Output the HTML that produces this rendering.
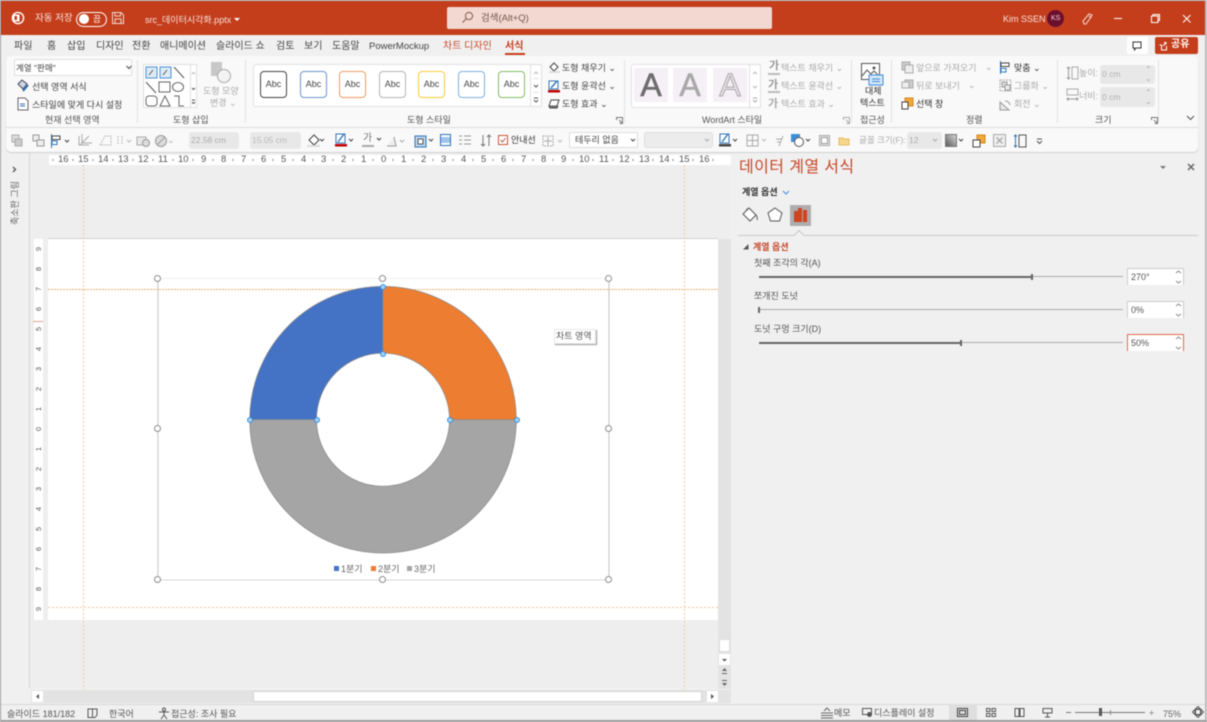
<!DOCTYPE html>
<html lang="ko"><head><meta charset="utf-8"><title>PowerPoint</title>
<style>
html,body{margin:0;padding:0;width:1207px;height:722px;overflow:hidden;background:#f0f0f0}
#r{position:absolute;left:0;top:0;width:1207px;height:722px;overflow:hidden;background:#f0f0f0;filter:blur(.5px);font-family:"Liberation Sans","Noto Sans CJK KR",sans-serif;color:#444}
#r div,#r span,#r svg{position:absolute}
.t{white-space:nowrap;font-size:9.5px;line-height:12px;color:#444}
.g{color:#aaa}.m{color:#666}
.w{color:#fff}
.b{background:#fff;border:1px solid #ddd;box-sizing:border-box}
.abc{width:24px;height:27px;border-radius:4px;border:1.5px solid;background:#fff;box-sizing:border-box;font-size:9px;line-height:24px;text-align:center;color:#444}
.dis{background:#e8e8e8;border-radius:3px;box-sizing:border-box;color:#aaa;font-size:8.5px;line-height:16px;padding-left:2px}
.wa{width:34px;height:34px;background:#f5f0f5;text-align:center;font:normal 32px/35px "Liberation Sans",sans-serif;-webkit-text-stroke:.6px currentColor}
.h{width:5px;height:5px;border:1.5px solid #8d8d8d;border-radius:50%;background:#fff}
.p{width:4px;height:4px;border:1px solid #3d8fd6;border-radius:50%;background:#9fd0f5}
</style></head><body><div id="r">

<!-- window frame -->
<div style="left:0;top:0;width:1207px;height:1px;background:#a9a9a9"></div>
<div style="left:0;top:0;width:1px;height:722px;background:#9a9a9a"></div>
<div style="left:1205px;top:0;width:2px;height:722px;background:#bbb"></div>
<div style="left:0;top:720px;width:1207px;height:2px;background:#9a9a9a"></div>

<!-- title bar -->
<div style="left:1px;top:1px;width:1204px;height:34px;background:#c43e1c"></div>
<svg style="left:11px;top:11px" width="14" height="14" viewBox="0 0 14 14"><circle cx="7" cy="7" r="5.6" fill="none" stroke="#fff" stroke-width="1.4"/><rect x="1.5" y="3.5" width="7" height="7" fill="#fff"/><rect x="3.5" y="5" width="2.5" height="4" fill="#c43e1c"/></svg>
<div class="t w" style="left:35px;top:13px;font-size:9.5px;color:#f7e3dd">자동 저장</div>
<div style="left:76px;top:12px;width:29px;height:13px;border:1px solid #fff;border-radius:8px"></div>
<div style="left:79px;top:14px;width:10px;height:10px;background:#fff;border-radius:50%"></div>
<div class="t" style="left:93px;top:13px;font-size:8.5px;color:#fff">끔</div>
<svg style="left:112px;top:12px" width="12" height="12" viewBox="0 0 12 12"><path d="M.5.5H9L11.5 3V11.5H.5Z M3 .5V4H8.5V.5 M3 11.5V7H9V11.5" fill="none" stroke="#f3d5cc"/></svg>
<div class="t" style="left:145px;top:14px;font-size:9px;color:#f7e3dd">src_데이터시각화.pptx</div>
<div style="left:234px;top:18px;border:3px solid transparent;border-top:3px solid #fff"></div>
<div style="left:447px;top:7px;width:325px;height:22px;background:#f2d8d1;border-radius:2px"></div>
<svg style="left:461px;top:11px" width="13" height="13" viewBox="0 0 13 13"><circle cx="8" cy="5" r="3.6" fill="none" stroke="#7d5a50"/><path d="M5.4 7.6 1.5 11.5" stroke="#7d5a50"/></svg>
<div class="t" style="left:481px;top:13px;font-size:9.5px;color:#74564e">검색(Alt+Q)</div>
<div class="t" style="left:1003px;top:13px;font-size:9px;color:#f7e3dd">Kim SSEN</div>
<div style="left:1047px;top:10px;width:17px;height:17px;border-radius:50%;background:#6c0f2c"></div>
<div class="t" style="left:1051px;top:13px;font-size:7px;color:#f3d5dc">KS</div>
<svg style="left:1081px;top:12px" width="13" height="14" viewBox="0 0 13 14"><path d="M3 12 2 9 8 2 11 3 10 5 5 12Z M8 4 10 6" fill="none" stroke="#f6dcd5"/></svg>
<div style="left:1114px;top:18px;width:8px;height:1px;background:#fff"></div>
<svg style="left:1150px;top:13px" width="11" height="11" viewBox="0 0 11 11"><path d="M1.5 3H8V9.5H1.5Z M3 3V1.5H9.5V7.5H8" fill="none" stroke="#fff"/></svg>
<svg style="left:1181px;top:13px" width="11" height="11" viewBox="0 0 11 11"><path d="M2 2 9.5 9.5M9.5 2 2 9.5" stroke="#fff"/></svg>

<!-- tabs -->
<div class="t" style="left:14px;top:41px;font-size:10px">파일</div>
<div class="t" style="left:47px;top:41px;font-size:10px">홈</div>
<div class="t" style="left:67px;top:41px;font-size:10px">삽입</div>
<div class="t" style="left:96px;top:41px;font-size:10px">디자인</div>
<div class="t" style="left:132px;top:41px;font-size:10px">전환</div>
<div class="t" style="left:160px;top:41px;font-size:10px">애니메이션</div>
<div class="t" style="left:216px;top:41px;font-size:10px">슬라이드 쇼</div>
<div class="t" style="left:276px;top:41px;font-size:10px">검토</div>
<div class="t" style="left:304px;top:41px;font-size:10px">보기</div>
<div class="t" style="left:332px;top:41px;font-size:10px">도움말</div>
<div class="t" style="left:369px;top:41px;font-size:9.5px">PowerMockup</div>
<div class="t" style="left:443px;top:41px;font-size:10px;color:#c8492a">차트 디자인</div>
<div class="t" style="left:505px;top:41px;font-size:10px;color:#c43e1c;font-weight:bold">서식</div>
<div style="left:505px;top:53px;width:20px;height:2px;background:#c43e1c"></div>
<div style="left:1127px;top:37px;width:21px;height:17px;background:#fff;border-radius:2px"></div>
<svg style="left:1132px;top:41px" width="10" height="10" viewBox="0 0 10 10"><path d="M1 1H9V7H4L2.5 9V7H1Z" fill="none" stroke="#333"/></svg>
<div style="left:1155px;top:37px;width:43px;height:17px;background:#c43e1c;border-radius:2px"></div>
<svg style="left:1158px;top:41px" width="10" height="10" viewBox="0 0 10 10"><path d="M1.5 4H3.5V9H8.5V5M5 5 8 1.5M6 1.5H8V3.5" fill="none" stroke="#fff"/></svg>
<div class="t" style="left:1171px;top:39px;font-size:10px;color:#fff;font-weight:bold">공유</div>

<!-- ribbon -->
<div style="left:6px;top:56px;width:1192px;height:96px;background:#f9f9f9;border-radius:5px;box-shadow:0 1px 1px #ccc"></div>
<div style="left:6px;top:127px;width:1192px;height:1px;background:#dcdcdc"></div>

<!-- group 1 -->
<div class="b" style="left:14px;top:59px;width:118px;height:17px;border-radius:2px"></div>
<div class="t" style="left:16px;top:62px;font-size:8.5px">계열 "판매"</div>
<svg style="left:126px;top:65px" width="6" height="5" viewBox="0 0 6 5"><path d="M.5 1 3 3.500 5.500 1" fill="none" stroke="#444"/></svg>
<svg style="left:17px;top:79px" width="13" height="14" viewBox="0 0 13 14"><path d="M1 5 5 1 10 5 6 10Z" fill="#cfd8e6" stroke="#445"/><path d="M6 12 11 6" stroke="#2f75b5" stroke-width="2"/></svg>
<div class="t" style="left:32px;top:81px;font-size:9px">선택 영역 서식</div>
<svg style="left:17px;top:97px" width="12" height="14" viewBox="0 0 12 14"><path d="M1 1H8L11 4V13H1Z" fill="#fff" stroke="#666"/><path d="M3 7H8M3 9H8" stroke="#2f75b5"/></svg>
<div class="t" style="left:32px;top:99px;font-size:9px">스타일에 맞게 다시 설정</div>
<div class="t m" style="left:45px;top:114px;font-size:9px;color:#555">현재 선택 영역</div>
<div style="left:137px;top:60px;width:1px;height:63px;background:#e3e3e3"></div>

<!-- group 2 -->
<div style="left:143px;top:64px;width:54px;height:44px;background:#fff;border:1px solid #e0e0e0;box-sizing:border-box"></div>
<svg style="left:144px;top:65px" width="46" height="42" viewBox="0 0 46 42">
<rect x="2" y="2" width="11" height="11" fill="#dcebf8" stroke="#4a8fd0"/><rect x="16" y="2" width="11" height="11" fill="#dcebf8" stroke="#4a8fd0"/>
<path d="M5 10 9 5M19 10 23 5" stroke="#555"/><path d="M30 2 40 13M2 17 12 28" stroke="#555"/>
<rect x="15" y="17" width="11" height="10" fill="none" stroke="#666"/><ellipse cx="34" cy="22" rx="5.5" ry="4.5" fill="none" stroke="#666"/>
<rect x="2" y="31" width="11" height="10" rx="3" fill="none" stroke="#666"/><path d="M16 41 21 31 26 41Z M30 31H35V41H40" fill="none" stroke="#666"/>
</svg>
<div style="left:190px;top:64px;width:7px;height:44px;background:#fff;border:1px solid #e0e0e0;box-sizing:border-box"></div>
<svg style="left:190px;top:64px" width="7" height="44" viewBox="0 0 7 44"><path d="M2 10 3.500 8.500 5 10" fill="none" stroke="#bbb"/><path d="M2 24 3.500 25.500 5 24" fill="none" stroke="#555"/><path d="M2 36H5M2 38 3.500 39.500 5 38" fill="none" stroke="#555"/></svg>
<svg style="left:210px;top:62px" width="22" height="22" viewBox="0 0 22 22"><rect x="1" y="0" width="11" height="14" fill="#c8c8c8"/><circle cx="14" cy="14" r="6.500" fill="#f3f3f3" stroke="#aaa"/></svg>
<div class="t g" style="left:203px;top:85px;font-size:9px">도형 모양</div>
<div class="t g" style="left:210px;top:97px;font-size:9px">변경 ⌄</div>
<div class="t m" style="left:173px;top:114px;font-size:9px;color:#555">도형 삽입</div>
<div style="left:245px;top:60px;width:1px;height:63px;background:#e3e3e3"></div>

<!-- group 3 -->
<div style="left:253px;top:64px;width:281px;height:43px;background:#fff;border:1px solid #e2e2e2;border-radius:3px;box-sizing:border-box"></div>
<div class="abc" style="left:260px;top:71px;width:27px;border-color:#444">Abc</div>
<div class="abc" style="left:300px;top:71px;width:27px;border-color:#6d93d2">Abc</div>
<div class="abc" style="left:339px;top:71px;width:27px;border-color:#ee9a63">Abc</div>
<div class="abc" style="left:379px;top:71px;width:27px;border-color:#b3b3b3">Abc</div>
<div class="abc" style="left:418px;top:71px;width:27px;border-color:#fdc83a">Abc</div>
<div class="abc" style="left:458px;top:71px;width:27px;border-color:#7cb0e0">Abc</div>
<div class="abc" style="left:498px;top:71px;width:27px;border-color:#85bb62">Abc</div>
<div style="left:530px;top:64px;width:12px;height:43px;background:#fff;border:1px solid #e0e0e0;box-sizing:border-box"></div>
<svg style="left:530px;top:64px" width="12" height="43" viewBox="0 0 12 43"><path d="M4 10 6 8 8 10" fill="none" stroke="#bbb"/><path d="M3 14.500H9M3 28.500H9" stroke="#e0e0e0"/><path d="M4 21 6 23 8 21" fill="none" stroke="#555"/><path d="M4 34H8M4 36 6 38 8 36" fill="none" stroke="#555"/></svg>
<svg style="left:549px;top:62px" width="11" height="11" viewBox="0 0 11 11"><path d="M1 5 5 1 9 5 5 9Z" fill="#fff" stroke="#444"/><rect x="0" y="9" width="11" height="2" fill="#ddd"/></svg>
<div class="t" style="left:562px;top:62px;font-size:9px">도형 채우기 ⌄</div>
<svg style="left:548px;top:80px" width="12" height="13" viewBox="0 0 12 13"><rect x="1" y="1" width="9" height="8" fill="#fff" stroke="#2f75b5"/><path d="M3 8 9 1" stroke="#2f75b5" stroke-width="1.400"/><rect x="0" y="10" width="12" height="2.500" fill="#c00000"/></svg>
<div class="t" style="left:562px;top:80px;font-size:9px">도형 윤곽선 ⌄</div>
<svg style="left:548px;top:99px" width="12" height="11" viewBox="0 0 12 11"><path d="M3 1H11L9 7H1Z" fill="#fff" stroke="#444"/><path d="M1 7 2 9H9L10 7" fill="#777" stroke="#444"/></svg>
<div class="t" style="left:562px;top:98px;font-size:9px">도형 효과 ⌄</div>
<div class="t m" style="left:407px;top:114px;font-size:9px;color:#555">도형 스타일</div>
<svg style="left:616px;top:117px" width="7" height="7" viewBox="0 0 7 7"><path d="M.5 3V.5H6.500V6.500H3.500M3 3 6 6" fill="none" stroke="#777"/></svg>
<div style="left:624px;top:60px;width:1px;height:63px;background:#e3e3e3"></div>

<!-- wordart -->
<div style="left:631px;top:64px;width:130px;height:44px;background:#fff;border:1px solid #e2e2e2;border-radius:3px;box-sizing:border-box"></div>
<div class="wa" style="left:634px;top:68px;color:#6d6d6d">A</div>
<div class="wa" style="left:673px;top:68px;color:#a9a9a9">A</div>
<div class="wa" style="left:713px;top:68px;color:#e6e2e6;-webkit-text-stroke:1px #a9a9a9">A</div>
<div style="left:749px;top:64px;width:12px;height:44px;background:#fff;border:1px solid #e0e0e0;box-sizing:border-box"></div>
<svg style="left:749px;top:64px" width="12" height="44" viewBox="0 0 12 44"><path d="M4 10 6 8 8 10M4 22 6 24 8 22" fill="none" stroke="#bbb"/><path d="M4 34H8M4 36 6 38 8 36" fill="none" stroke="#aaa"/></svg>
<div class="t g" style="left:769px;top:60px;font-size:11px;font-weight:bold;color:#999">가</div>
<div style="left:768px;top:73px;width:12px;height:2px;background:#bbb"></div>
<div class="t g" style="left:781px;top:62px;font-size:9px">텍스트 채우기 ⌄</div>
<div class="t g" style="left:768px;top:79px;font-size:11px;font-weight:bold;color:#999">가</div>
<div style="left:768px;top:91px;width:12px;height:2px;background:#bbb"></div>
<div class="t g" style="left:781px;top:80px;font-size:9px">텍스트 윤곽선 ⌄</div>
<div class="t g" style="left:768px;top:98px;font-size:11px;font-weight:bold;color:#aaa">가</div>
<div class="t g" style="left:781px;top:98px;font-size:9px">텍스트 효과 ⌄</div>
<div class="t m" style="left:702px;top:114px;font-size:9px;color:#555">WordArt 스타일</div>
<svg style="left:843px;top:117px" width="7" height="7" viewBox="0 0 7 7"><path d="M.5 3V.5H6.500V6.500H3.500M3 3 6 6" fill="none" stroke="#aaa"/></svg>
<div style="left:851px;top:60px;width:1px;height:63px;background:#e3e3e3"></div>
<svg style="left:861px;top:63px" width="23" height="24" viewBox="0 0 23 24"><rect x=".5" y=".5" width="18" height="16" fill="#fff" stroke="#555"/><path d="M1 13 6 7 10 11 13 8 18 13" fill="none" stroke="#555"/><circle cx="13" cy="5" r="1.500" fill="#555"/><rect x="8" y="12" width="14" height="10" fill="#d5e7f7" stroke="#3f8ed8"/><path d="M11 16H19M11 18.500H19" stroke="#3f8ed8"/></svg>
<div class="t" style="left:865px;top:85px;font-size:9px;color:#333">대체</div>
<div class="t" style="left:860px;top:97px;font-size:9px;color:#333">텍스트</div>
<div class="t m" style="left:860px;top:114px;font-size:9px;color:#555">접근성</div>
<div style="left:891px;top:60px;width:1px;height:63px;background:#e3e3e3"></div>

<!-- arrange -->
<svg style="left:901px;top:61px" width="13" height="50" viewBox="0 0 13 50"><rect x="1" y="1" width="8" height="8" fill="#ccc" stroke="#aaa"/><rect x="4" y="4" width="8" height="8" fill="#eee" stroke="#aaa"/><rect x="4" y="19" width="8" height="8" fill="#ccc" stroke="#aaa"/><rect x="1" y="21" width="7" height="6" fill="#eee" stroke="#aaa"/><rect x="4" y="37" width="8" height="8" fill="#f2a83c" stroke="#d0861e"/><rect x="1" y="41" width="6" height="7" fill="#fff" stroke="#444"/></svg>
<div class="t g" style="left:916px;top:62px;font-size:9px">앞으로 가져오기</div>
<div class="t g" style="left:985px;top:61px;font-size:9px">⌄</div>
<div class="t g" style="left:916px;top:80px;font-size:9px">뒤로 보내기</div>
<div class="t g" style="left:968px;top:79px;font-size:9px">⌄</div>
<div class="t" style="left:916px;top:98px;font-size:9px;color:#333">선택 창</div>
<svg style="left:999px;top:61px" width="13" height="13" viewBox="0 0 13 13"><path d="M1.500 0V13" stroke="#2f75b5"/><rect x="2" y="2" width="8" height="3.500" fill="#fff" stroke="#444"/><rect x="2" y="7.500" width="5" height="3.500" fill="#fff" stroke="#2f75b5"/></svg>
<div class="t" style="left:1014px;top:62px;font-size:9px;color:#333">맞춤 ⌄</div>
<svg style="left:999px;top:79px" width="13" height="13" viewBox="0 0 13 13"><rect x="1" y="1" width="11" height="11" fill="none" stroke="#aaa" stroke-dasharray="2 1"/><rect x="3" y="3" width="5" height="5" fill="#ddd" stroke="#999"/><rect x="6" y="6" width="5" height="5" fill="#eee" stroke="#999"/></svg>
<div class="t g" style="left:1014px;top:80px;font-size:9px">그룹화 ⌄</div>
<svg style="left:999px;top:98px" width="13" height="13" viewBox="0 0 13 13"><path d="M1 12 10 12 1 4Z" fill="#e8e8e8" stroke="#999"/><path d="M6 3Q10 3 11 7" fill="none" stroke="#999"/></svg>
<div class="t g" style="left:1014px;top:98px;font-size:9px">회전 ⌄</div>
<div class="t m" style="left:966px;top:114px;font-size:9px;color:#555">정렬</div>
<div style="left:1057px;top:60px;width:1px;height:63px;background:#e3e3e3"></div>

<!-- size -->
<svg style="left:1066px;top:66px" width="13" height="14" viewBox="0 0 13 14"><path d="M2.500 1V13M1 2.500 2.500 1 4 2.500M1 11.500 2.500 13 4 11.500" fill="none" stroke="#999"/><rect x="6" y="1" width="6" height="12" fill="none" stroke="#aaa"/></svg>
<div class="t g" style="left:1079px;top:67px;font-size:9px">높이:</div>
<div class="dis" style="left:1100px;top:65px;width:55px;height:19px;line-height:19px;color:#b0b0b0">0 cm</div>
<svg style="left:1066px;top:88px" width="13" height="14" viewBox="0 0 13 14"><rect x="1" y="1" width="11" height="6" fill="none" stroke="#aaa"/><path d="M1 11H12M2.500 9.500 1 11 2.500 12.500M10.500 9.500 12 11 10.500 12.500" fill="none" stroke="#999"/></svg>
<div class="t g" style="left:1079px;top:90px;font-size:9px">너비:</div>
<div class="dis" style="left:1100px;top:87px;width:55px;height:20px;line-height:20px;color:#b0b0b0">0 cm</div>
<div class="t g" style="left:1145px;top:65px;font-size:8px;line-height:9px">⌃<br>⌄</div>
<div class="t g" style="left:1145px;top:88px;font-size:8px;line-height:9px">⌃<br>⌄</div>
<div class="t m" style="left:1095px;top:114px;font-size:9px;color:#555">크기</div>
<svg style="left:1151px;top:117px" width="7" height="7" viewBox="0 0 7 7"><path d="M.5 3V.5H6.500V6.500H3.500M3 3 6 6" fill="none" stroke="#777"/></svg>
<div style="left:1158px;top:60px;width:1px;height:63px;background:#e3e3e3"></div>
<svg style="left:1186px;top:115px" width="9" height="6" viewBox="0 0 9 6"><path d="M1 1 4.500 4.500 8 1" fill="none" stroke="#555"/></svg>

<!-- mini toolbar row -->
<svg style="left:10px;top:133px" width="160" height="16" viewBox="0 0 160 16">
<rect x="2" y="2" width="7" height="7" fill="#ddd" stroke="#aaa"/><rect x="5" y="6" width="7" height="7" fill="#ccc" stroke="#aaa"/>
<rect x="23" y="2" width="6" height="6" fill="#eee" stroke="#999"/><rect x="27" y="7" width="7" height="6" fill="#eee" stroke="#999"/>
<path d="M41.500 1V15" stroke="#2f75b5"/><rect x="42" y="3" width="8" height="3.500" fill="#fff" stroke="#444"/><rect x="42" y="8" width="5" height="3.500" fill="#fff" stroke="#2f75b5"/><path d="M55 7 57 9 59 7" fill="none" stroke="#444"/>
<path d="M69 3V12H79M72 1V10H82M70 12 79 3" fill="none" stroke="#aaa"/>
<path d="M90 12 95 3H101V12Z M108 3V12M112 3V12" fill="none" stroke="#bbb" stroke-dasharray="2 1"/>
<path d="M117 7 119 9 121 7" fill="none" stroke="#bbb"/>
<rect x="127" y="4" width="9" height="8" fill="#e8e8e8" stroke="#aaa"/><circle cx="136" cy="10" r="3.500" fill="#ddd" stroke="#999"/>
<circle cx="151" cy="8" r="5.500" fill="#ddd" stroke="#999"/><path d="M147 12 155 4" stroke="#999"/>
</svg>
<div class="t g" style="left:167px;top:134px;font-size:9px">⌄</div>
<div class="dis" style="left:189px;top:132px;width:50px;height:17px;line-height:17px;color:#aaa;">22.58 cm</div>
<div class="dis" style="left:250px;top:132px;width:51px;height:17px;line-height:17px;color:#bbb;">15.05 cm</div>
<svg style="left:307px;top:133px" width="18" height="15" viewBox="0 0 18 15"><path d="M2 7 7 2 12 7 7 12Z" fill="#fff" stroke="#444"/><rect x="0" y="12" width="13" height="2" fill="#ddd"/><path d="M13 6 15 8 17 6" fill="none" stroke="#444"/></svg>
<svg style="left:335px;top:133px" width="19" height="15" viewBox="0 0 19 15"><rect x="1" y="1" width="9" height="9" fill="#fff" stroke="#2f75b5"/><path d="M3 9 9 1" stroke="#2f75b5" stroke-width="1.400"/><rect x="0" y="11" width="12" height="2.500" fill="#c00000"/><path d="M14 6 16 8 18 6" fill="none" stroke="#444"/></svg>
<div class="t m" style="left:363px;top:133px;font-size:10px;color:#777">가</div>
<div style="left:362px;top:145px;width:12px;height:2px;background:#aaa"></div>
<svg style="left:376px;top:137px" width="6" height="6" viewBox="0 0 6 6"><path d="M1 1 3 3 5 1" fill="none" stroke="#444"/></svg>
<svg style="left:386px;top:134px" width="20" height="14" viewBox="0 0 20 14"><path d="M1 12 10 12 8 3" fill="#eee" stroke="#999"/><path d="M14 6 16 8 18 6" fill="none" stroke="#aaa"/></svg>
<svg style="left:414px;top:133px" width="20" height="16" viewBox="0 0 20 16"><rect x="1" y="3" width="11" height="11" fill="#bcd6ef" stroke="#2f75b5"/><rect x="4" y="6" width="5" height="5" fill="#fff" stroke="#555"/><path d="M15 6 17 8 19 6" fill="none" stroke="#444"/></svg>
<svg style="left:440px;top:134px" width="11" height="12" viewBox="0 0 11 12"><rect x=".5" y=".5" width="10" height="11" fill="#fff" stroke="#2f6eb5"/><rect x="1" y="3" width="9" height="6" fill="#9fc4ea"/></svg>
<svg style="left:459px;top:134px" width="12" height="12" viewBox="0 0 12 12"><path d="M0 2H3M5 2H12M0 6H3M5 6H12M0 10H3M5 10H12" stroke="#999"/></svg>
<svg style="left:480px;top:134px" width="12" height="13" viewBox="0 0 12 13"><path d="M3 1V12M1 10 3 12 5 10M9 1V12M7 3 9 1 11 3" fill="none" stroke="#777"/></svg>
<div style="left:498px;top:135px;width:10px;height:10px;background:#fff;border:1px solid #c8573a;box-sizing:border-box"></div>
<svg style="left:498px;top:135px" width="10" height="10" viewBox="0 0 10 10"><path d="M2.500 5 4.500 7 7.500 3" fill="none" stroke="#c8573a"/></svg>
<div class="t" style="left:511px;top:134px;font-size:9px;color:#333">안내선</div>
<svg style="left:542px;top:135px" width="22" height="12" viewBox="0 0 22 12"><rect x="1" y="1" width="10" height="10" fill="none" stroke="#aaa" stroke-dasharray="2 1"/><path d="M6 2V10M2 6H10" stroke="#aaa"/><path d="M16 5 18 7 20 5" fill="none" stroke="#bbb"/></svg>
<div class="b" style="left:569px;top:132px;width:69px;height:16px;border-radius:2px"></div>
<div class="t" style="left:575px;top:134px;font-size:9px">테두리 없음</div>
<svg style="left:630px;top:138px" width="6" height="5" viewBox="0 0 6 5"><path d="M1 1 3 3 5 1" fill="none" stroke="#444"/></svg>
<div class="dis" style="left:644px;top:132px;width:69px;height:16px;background:#ececec;border:1px solid #ddd"></div>
<svg style="left:704px;top:138px" width="6" height="5" viewBox="0 0 6 5"><path d="M1 1 3 3 5 1" fill="none" stroke="#aaa"/></svg>
<svg style="left:719px;top:133px" width="21" height="15" viewBox="0 0 21 15"><rect x="1" y="1" width="9" height="9" fill="#fff" stroke="#2f75b5"/><path d="M3 9 9 1" stroke="#2f75b5" stroke-width="1.400"/><rect x="0" y="11" width="12" height="2.500" fill="#444"/><path d="M14 6 16 8 18 6" fill="none" stroke="#444"/></svg>
<svg style="left:746px;top:134px" width="22" height="13" viewBox="0 0 22 13"><rect x="1" y="1" width="11" height="11" fill="none" stroke="#aaa"/><path d="M6.500 1V12M1 6.500H12" stroke="#aaa"/><path d="M16 5 18 7 20 5" fill="none" stroke="#bbb"/></svg>
<svg style="left:775px;top:134px" width="12" height="13" viewBox="0 0 12 13"><path d="M1 5H7M2 8H6M8 2 4 12" fill="none" stroke="#aaa"/></svg>
<svg style="left:790px;top:133px" width="22" height="15" viewBox="0 0 22 15"><rect x="1" y="1" width="9" height="8" fill="#3f8ed8"/><circle cx="9" cy="9" r="4.500" fill="#fff" stroke="#555"/><path d="M16 6 18 8 20 6" fill="none" stroke="#444"/></svg>
<svg style="left:818px;top:134px" width="13" height="13" viewBox="0 0 13 13"><rect x="1.500" y="1.500" width="10" height="10" fill="#e8e8e8" stroke="#aaa"/><rect x="3.500" y="3.500" width="6" height="6" fill="#fff" stroke="#999"/></svg>
<svg style="left:838px;top:136px" width="12" height="10" viewBox="0 0 12 10"><path d="M1 2H5L6 3H11V9H1Z" fill="#f7d58a" stroke="#e3bb60"/></svg>
<div class="t g" style="left:859px;top:134px;font-size:8.5px">글꼴 크기(F):</div>
<div class="dis" style="left:907px;top:132px;width:35px;height:17px;line-height:17px;color:#aaa">12</div>
<svg style="left:932px;top:138px" width="6" height="5" viewBox="0 0 6 5"><path d="M1 1 3 3 5 1" fill="none" stroke="#aaa"/></svg>
<svg style="left:945px;top:134px" width="20" height="13" viewBox="0 0 20 13"><defs><linearGradient id="gd" x1="0" y1="1" x2="1" y2="0"><stop offset="0" stop-color="#555"/><stop offset="1" stop-color="#ddd"/></linearGradient></defs><rect x=".5" y=".5" width="11" height="12" fill="url(#gd)" stroke="#777"/><path d="M14 5 16 7 18 5" fill="none" stroke="#444"/></svg>
<svg style="left:972px;top:134px" width="14" height="14" viewBox="0 0 14 14"><rect x="5" y="1" width="8" height="8" fill="#f2a83c" stroke="#d0861e"/><rect x="1" y="6" width="7" height="7" fill="#fff" stroke="#444"/></svg>
<svg style="left:993px;top:134px" width="13" height="13" viewBox="0 0 13 13"><rect x=".5" y=".5" width="12" height="12" fill="#eee" stroke="#aaa"/><path d="M3.500 3.500 9.500 9.500M9.500 3.500 3.500 9.500" stroke="#999"/></svg>
<svg style="left:1013px;top:134px" width="14" height="14" viewBox="0 0 14 14"><path d="M2.500 1V13M1 2.500 2.500 1 4 2.500M1 11.500 2.500 13 4 11.500" fill="none" stroke="#2f75b5"/><rect x="6" y="1" width="7" height="12" fill="none" stroke="#555"/></svg>
<svg style="left:1036px;top:138px" width="7" height="7" viewBox="0 0 7 7"><path d="M1 1H6M1 3 3.500 5.500 6 3" fill="none" stroke="#555"/></svg>

<!-- left collapsed pane -->
<svg style="left:12px;top:166px" width="5" height="7" viewBox="0 0 5 7"><path d="M1 1 3.500 3.500 1 6" fill="none" stroke="#555" stroke-width="1.300"/></svg>
<div class="t m" style="left:15px;top:183px;font-size:9px;color:#666;transform-origin:0 0;transform:rotate(-90deg) translate(-42px,-6px)">축소판 그림</div>
<div style="left:29px;top:153px;width:1px;height:535px;background:#d6d6d6"></div>

<!-- canvas -->
<div style="left:30px;top:153px;width:701px;height:535px;background:#eeeeee"></div>
<!-- horizontal ruler -->
<div style="left:49px;top:155px;width:682px;height:10px;background:#fff"></div>
<div class="t" style="left:58px;top:154px;font-size:9.500px;color:#555">16</div>
<div class="t" style="left:78px;top:154px;font-size:9.500px;color:#555">15</div>
<div class="t" style="left:98px;top:154px;font-size:9.500px;color:#555">14</div>
<div class="t" style="left:118px;top:154px;font-size:9.500px;color:#555">13</div>
<div class="t" style="left:138px;top:154px;font-size:9.500px;color:#555">12</div>
<div class="t" style="left:158px;top:154px;font-size:9.500px;color:#555">11</div>
<div class="t" style="left:178px;top:154px;font-size:9.500px;color:#555">10</div>
<div class="t" style="left:201px;top:154px;font-size:9.500px;color:#555">9</div>
<div class="t" style="left:221px;top:154px;font-size:9.500px;color:#555">8</div>
<div class="t" style="left:241px;top:154px;font-size:9.500px;color:#555">7</div>
<div class="t" style="left:261px;top:154px;font-size:9.500px;color:#555">6</div>
<div class="t" style="left:281px;top:154px;font-size:9.500px;color:#555">5</div>
<div class="t" style="left:301px;top:154px;font-size:9.500px;color:#555">4</div>
<div class="t" style="left:321px;top:154px;font-size:9.500px;color:#555">3</div>
<div class="t" style="left:341px;top:154px;font-size:9.500px;color:#555">2</div>
<div class="t" style="left:361px;top:154px;font-size:9.500px;color:#555">1</div>
<div class="t" style="left:381px;top:154px;font-size:9.500px;color:#555">0</div>
<div class="t" style="left:401px;top:154px;font-size:9.500px;color:#555">1</div>
<div class="t" style="left:421px;top:154px;font-size:9.500px;color:#555">2</div>
<div class="t" style="left:441px;top:154px;font-size:9.500px;color:#555">3</div>
<div class="t" style="left:461px;top:154px;font-size:9.500px;color:#555">4</div>
<div class="t" style="left:481px;top:154px;font-size:9.500px;color:#555">5</div>
<div class="t" style="left:501px;top:154px;font-size:9.500px;color:#555">6</div>
<div class="t" style="left:521px;top:154px;font-size:9.500px;color:#555">7</div>
<div class="t" style="left:541px;top:154px;font-size:9.500px;color:#555">8</div>
<div class="t" style="left:561px;top:154px;font-size:9.500px;color:#555">9</div>
<div class="t" style="left:579px;top:154px;font-size:9.500px;color:#555">10</div>
<div class="t" style="left:599px;top:154px;font-size:9.500px;color:#555">11</div>
<div class="t" style="left:619px;top:154px;font-size:9.500px;color:#555">12</div>
<div class="t" style="left:639px;top:154px;font-size:9.500px;color:#555">13</div>
<div class="t" style="left:659px;top:154px;font-size:9.500px;color:#555">14</div>
<div class="t" style="left:679px;top:154px;font-size:9.500px;color:#555">15</div>
<div class="t" style="left:699px;top:154px;font-size:9.500px;color:#555">16</div>
<svg style="left:49px;top:157px" width="682" height="6" viewBox="0 0 682 6"><path d="M4 2V4M24 2V4M44 2V4M64 2V4M84 2V4M104 2V4M124 2V4M144 2V4M164 2V4M184 2V4M204 2V4M224 2V4M244 2V4M264 2V4M284 2V4M304 2V4M324 2V4M344 2V4M364 2V4M384 2V4M404 2V4M424 2V4M444 2V4M464 2V4M484 2V4M504 2V4M524 2V4M544 2V4M564 2V4M584 2V4M604 2V4M624 2V4M644 2V4M664 2V4" stroke="#888"/></svg>
<!-- vertical ruler -->
<div style="left:34px;top:239px;width:9px;height:381px;background:#fff"></div>
<svg style="left:34px;top:239px" width="9" height="381" viewBox="0 0 9 381" font-family="Liberation Sans,sans-serif" font-size="7.500" fill="#555">
<g text-anchor="middle">
<text transform="translate(7,10) rotate(-90)">9</text><text transform="translate(7,30) rotate(-90)">8</text><text transform="translate(7,50) rotate(-90)">7</text><text transform="translate(7,70) rotate(-90)">6</text><text transform="translate(7,90) rotate(-90)">5</text><text transform="translate(7,110) rotate(-90)">4</text><text transform="translate(7,130) rotate(-90)">3</text><text transform="translate(7,150) rotate(-90)">2</text><text transform="translate(7,170) rotate(-90)">1</text><text transform="translate(7,190) rotate(-90)">0</text><text transform="translate(7,210) rotate(-90)">1</text><text transform="translate(7,230) rotate(-90)">2</text><text transform="translate(7,250) rotate(-90)">3</text><text transform="translate(7,270) rotate(-90)">4</text><text transform="translate(7,290) rotate(-90)">5</text><text transform="translate(7,310) rotate(-90)">6</text><text transform="translate(7,330) rotate(-90)">7</text><text transform="translate(7,350) rotate(-90)">8</text><text transform="translate(7,370) rotate(-90)">9</text>
</g></svg>
<div style="left:33px;top:321px;width:10px;height:1px;background:#e0a090"></div>

<!-- slide -->
<div style="left:48px;top:238px;width:670px;height:382px;background:#fff;border-top:1px solid #cfcfcf;box-sizing:border-box"></div>
<svg style="left:0;top:0" width="1207" height="722" viewBox="0 0 1207 722">
<path d="M83.500 165V690" stroke="#f4c99a" stroke-dasharray="2 2" fill="none"/>
<path d="M684.500 165V690" stroke="#f4c99a" stroke-dasharray="2 2" fill="none"/>
<path d="M48 289.500H718" stroke="#ecb36d" stroke-dasharray="2 1" fill="none"/>
<path d="M48 607.500H718" stroke="#f2c99a" stroke-dasharray="2 2" fill="none"/>
<path d="M158 278.500H609" stroke="#eeeeee" fill="none"/>
<path d="M158 580H609" stroke="#d8d8d8" fill="none"/>
<path d="M158 278.500V580M609 278.500V580" stroke="#c4c4c4" fill="none"/>
<path d="M249.700 419.700A133.300 133.300 0 0 1 383 286.400V353.200A66.500 66.500 0 0 0 316.500 419.700Z" fill="#4472c4" stroke="#8a8a8a" stroke-width=".7"/>
<path d="M383 286.400A133.300 133.300 0 0 1 516.300 419.700H449.500A66.500 66.500 0 0 0 383 353.200Z" fill="#ed7d31" stroke="#8a8a8a" stroke-width=".7"/>
<path d="M249.700 419.700H316.500A66.500 66.500 0 0 0 449.500 419.700H516.300A133.300 133.300 0 0 1 249.700 419.700Z" fill="#a5a5a5" stroke="#8a8a8a" stroke-width=".7"/>
</svg>
<div class="h" style="left:154px;top:275px"></div>
<div class="h" style="left:379px;top:275px"></div>
<div class="h" style="left:605px;top:275px"></div>
<div class="h" style="left:154px;top:425px"></div>
<div class="h" style="left:605px;top:425px"></div>
<div class="h" style="left:154px;top:576px"></div>
<div class="h" style="left:379px;top:576px"></div>
<div class="h" style="left:605px;top:576px"></div>
<div class="p" style="left:380px;top:284px"></div>
<div class="p" style="left:380px;top:351px"></div>
<div class="p" style="left:247px;top:417px"></div>
<div class="p" style="left:314px;top:417px"></div>
<div class="p" style="left:447px;top:417px"></div>
<div class="p" style="left:514px;top:417px"></div>
<div style="left:334px;top:566px;width:5px;height:5px;background:#4472c4"></div>
<div class="t" style="left:341px;top:563px;font-size:9px;color:#666">1분기</div>
<div style="left:371px;top:566px;width:5px;height:5px;background:#ed7d31"></div>
<div class="t" style="left:378px;top:563px;font-size:9px;color:#666">2분기</div>
<div style="left:407px;top:566px;width:5px;height:5px;background:#a5a5a5"></div>
<div class="t" style="left:414px;top:563px;font-size:9px;color:#666">3분기</div>
<div style="left:554px;top:329px;width:42px;height:15px;background:#fff;box-shadow:1px 1px 1px #999;border:1px solid #e8e8e8;box-sizing:border-box"></div>
<div class="t" style="left:556px;top:330px;font-size:9px;color:#555">차트 영역</div>

<!-- scrollbars -->
<div style="left:718px;top:239px;width:13px;height:450px;background:#e3e3e3"></div>
<div style="left:719px;top:639px;width:11px;height:13px;background:#fff;border:1px solid #ddd;box-sizing:border-box"></div>
<div style="left:719px;top:654px;width:11px;height:11px;background:#fff"></div>
<svg style="left:719px;top:654px" width="11" height="36" viewBox="0 0 11 36"><path d="M3 5H8L5.500 7.500Z" fill="#555"/><path d="M5.500 14 8 17H3ZM3 19H8V20H3Z" fill="#666"/><path d="M3 26H8V27H3ZM3 29H8L5.500 32Z" fill="#666"/></svg>
<div style="left:31px;top:690px;width:700px;height:13px;background:#e3e3e3"></div>
<div style="left:32px;top:691px;width:11px;height:11px;background:#fff"></div>
<svg style="left:32px;top:691px" width="11" height="11" viewBox="0 0 11 11"><path d="M7 3V8L4 5.500Z" fill="#555"/></svg>
<div style="left:253px;top:691px;width:449px;height:11px;background:#fff;border:1px solid #d5d5d5;box-sizing:border-box"></div>
<div style="left:707px;top:691px;width:11px;height:11px;background:#fff"></div>
<svg style="left:707px;top:691px" width="11" height="11" viewBox="0 0 11 11"><path d="M4 3V8L7 5.500Z" fill="#555"/></svg>

<!-- format panel -->
<div style="left:731px;top:153px;width:474px;height:550px;background:#f0f0f0"></div>
<div class="t" style="left:739px;top:158px;font-size:16px;line-height:20px;color:#c8492a;letter-spacing:.4px">데이터 계열 서식</div>
<div style="left:1160px;top:166px;border:3px solid transparent;border-top:3px solid #777"></div>
<svg style="left:1187px;top:163px" width="8" height="8" viewBox="0 0 8 8"><path d="M1 1 7 7M7 1 1 7" stroke="#666" stroke-width="1.500"/></svg>
<div class="t" style="left:742px;top:186px;font-size:9px;font-weight:bold;color:#333">계열 옵션</div>
<svg style="left:782px;top:190px" width="8" height="5" viewBox="0 0 8 5"><path d="M1 1 4 4 7 1" fill="none" stroke="#3f8ed8"/></svg>
<svg style="left:741px;top:206px" width="18" height="17" viewBox="0 0 18 17"><path d="M8 2 15 9 9 15 2 8Z" fill="#fff" stroke="#555"/><path d="M5 4 8 2M15 9Q17 12 16 14" fill="none" stroke="#555"/></svg>
<svg style="left:767px;top:207px" width="16" height="16" viewBox="0 0 16 16"><path d="M8 1 15 6 12.500 14H3.500L1 6Z" fill="#fff" stroke="#555"/></svg>
<div style="left:790px;top:205px;width:21px;height:21px;background:#adadad"></div>
<div style="left:794px;top:211px;width:4px;height:11px;background:#d0431f"></div>
<div style="left:798px;top:208px;width:4px;height:14px;background:#d0431f"></div>
<div style="left:803px;top:210px;width:4px;height:12px;background:#d0431f"></div>
<svg style="left:738px;top:229px" width="460" height="8" viewBox="0 0 460 8"><path d="M0 6.500H56L61 1.500 66 6.500H460" fill="none" stroke="#c9c9c9"/></svg>
<svg style="left:743px;top:244px" width="6" height="6" viewBox="0 0 6 6"><path d="M0 5.500H5.500V0Z" fill="#555"/></svg>
<div class="t" style="left:753px;top:241px;font-size:9px;font-weight:bold;color:#c8492a">계열 옵션</div>

<div class="t" style="left:754px;top:257px;font-size:9px;color:#555">첫째 조각의 각(A)</div>
<div style="left:759px;top:276px;width:364px;height:1px;background:#aaa"></div>
<div style="left:759px;top:276px;width:273px;height:2px;background:#666"></div>
<div style="left:1031px;top:274px;width:2px;height:6px;background:#666"></div>
<div style="left:1127px;top:268px;width:57px;height:17px;background:#fff;border:1px solid #ccc;border-bottom:0;box-sizing:border-box"></div>
<div class="t" style="left:1131px;top:271px;font-size:9px;color:#555">270°</div>

<div class="t" style="left:754px;top:290px;font-size:9px;color:#555">쪼개진 도넛</div>
<div style="left:759px;top:309px;width:364px;height:1px;background:#aaa"></div>
<div style="left:758px;top:307px;width:2px;height:6px;background:#666"></div>
<div style="left:1127px;top:301px;width:57px;height:17px;background:#fff;border:1px solid #ccc;border-bottom:0;box-sizing:border-box"></div>
<div class="t" style="left:1131px;top:304px;font-size:9px;color:#555">0%</div>

<div class="t" style="left:754px;top:323px;font-size:9px;color:#555">도넛 구멍 크기(D)</div>
<div style="left:759px;top:342px;width:364px;height:1px;background:#aaa"></div>
<div style="left:759px;top:342px;width:202px;height:2px;background:#666"></div>
<div style="left:960px;top:340px;width:2px;height:6px;background:#666"></div>
<div style="left:1127px;top:334px;width:57px;height:17px;background:#fff;border:1px solid #e0694a;border-bottom:0;box-sizing:border-box"></div>
<div class="t" style="left:1131px;top:337px;font-size:9px;color:#555">50%</div>
<svg style="left:1175px;top:270px" width="7" height="80" viewBox="0 0 7 80"><path d="M1 3 3.500 1 6 3M1 11 3.500 13 6 11M1 36 3.500 34 6 36M1 44 3.500 46 6 44M1 69 3.500 67 6 69M1 77 3.500 79 6 77" fill="none" stroke="#888"/></svg>

<!-- status bar -->
<div style="left:1px;top:704px;width:1204px;height:16px;background:#f0f0f0;border-top:1px solid #d8d8d8;box-sizing:border-box"></div>
<div class="t m" style="left:7px;top:708px;font-size:9px;color:#555">슬라이드 181/182</div>
<svg style="left:87px;top:708px" width="11" height="11" viewBox="0 0 11 11"><path d="M1 1H5.500V9.500H1ZM5.500 1H10V7L8 9.500H5.500" fill="none" stroke="#555"/></svg>
<div class="t m" style="left:109px;top:708px;font-size:9px;color:#555">한국어</div>
<svg style="left:158px;top:707px" width="12" height="13" viewBox="0 0 12 13"><circle cx="6" cy="2.500" r="1.500" fill="none" stroke="#555"/><path d="M1 5H11M6 5V8L3 12M6 8 9 12" fill="none" stroke="#555"/></svg>
<div class="t m" style="left:171px;top:708px;font-size:9px;color:#555">접근성: 조사 필요</div>
<svg style="left:821px;top:707px" width="12" height="12" viewBox="0 0 12 12"><path d="M3 4 6 1 9 4M0 6H12M0 8.500H12M0 11H12" fill="none" stroke="#666"/></svg>
<div class="t m" style="left:834px;top:707px;font-size:9px;color:#555">메모</div>
<svg style="left:862px;top:708px" width="11" height="10" viewBox="0 0 11 10"><rect x=".5" y=".5" width="9" height="6" fill="none" stroke="#555"/><circle cx="7.500" cy="6.500" r="2.500" fill="#555"/></svg>
<div class="t m" style="left:874px;top:707px;font-size:9px;color:#555">디스플레이 설정</div>
<div style="left:949px;top:704px;width:28px;height:16px;background:#dedede"></div>
<svg style="left:957px;top:708px" width="100" height="11" viewBox="0 0 100 11">
<rect x=".5" y=".5" width="10" height="8" fill="none" stroke="#444"/><rect x="2.500" y="2.500" width="6" height="4" fill="none" stroke="#444"/>
<rect x="29.500" y=".5" width="3.500" height="3" fill="none" stroke="#555"/><rect x="35" y=".5" width="3.500" height="3" fill="none" stroke="#555"/><rect x="29.500" y="5.500" width="3.500" height="3" fill="none" stroke="#555"/><rect x="35" y="5.500" width="3.500" height="3" fill="none" stroke="#555"/>
<rect x="58" y=".5" width="4" height="8" fill="none" stroke="#555"/><rect x="63" y=".5" width="4" height="8" fill="none" stroke="#555"/>
<path d="M86 .5H95V5H86ZM90.500 5V9M88 9H93" fill="none" stroke="#555"/>
</svg>
<div style="left:1066px;top:712px;width:5px;height:1px;background:#777"></div>
<div style="left:1075px;top:712px;width:70px;height:1px;background:#777"></div>
<div style="left:1099px;top:708px;width:3px;height:8px;background:#555"></div>
<div style="left:1110px;top:710px;width:1px;height:5px;background:#888"></div>
<div class="t m" style="left:1149px;top:707px;font-size:9px;color:#777">+</div>
<div class="t m" style="left:1163px;top:708px;font-size:9px;color:#666">75%</div>
<svg style="left:1192px;top:706px" width="12" height="12" viewBox="0 0 12 12"><path d="M6 .5 8.500 3H3.500ZM6 11.500 8.500 9H3.500ZM.5 6 3 3.500V8.500ZM11.500 6 9 3.500V8.500Z" fill="none" stroke="#555"/><rect x="3.500" y="3.500" width="5" height="5" fill="none" stroke="#555"/></svg>

</div></body></html>
